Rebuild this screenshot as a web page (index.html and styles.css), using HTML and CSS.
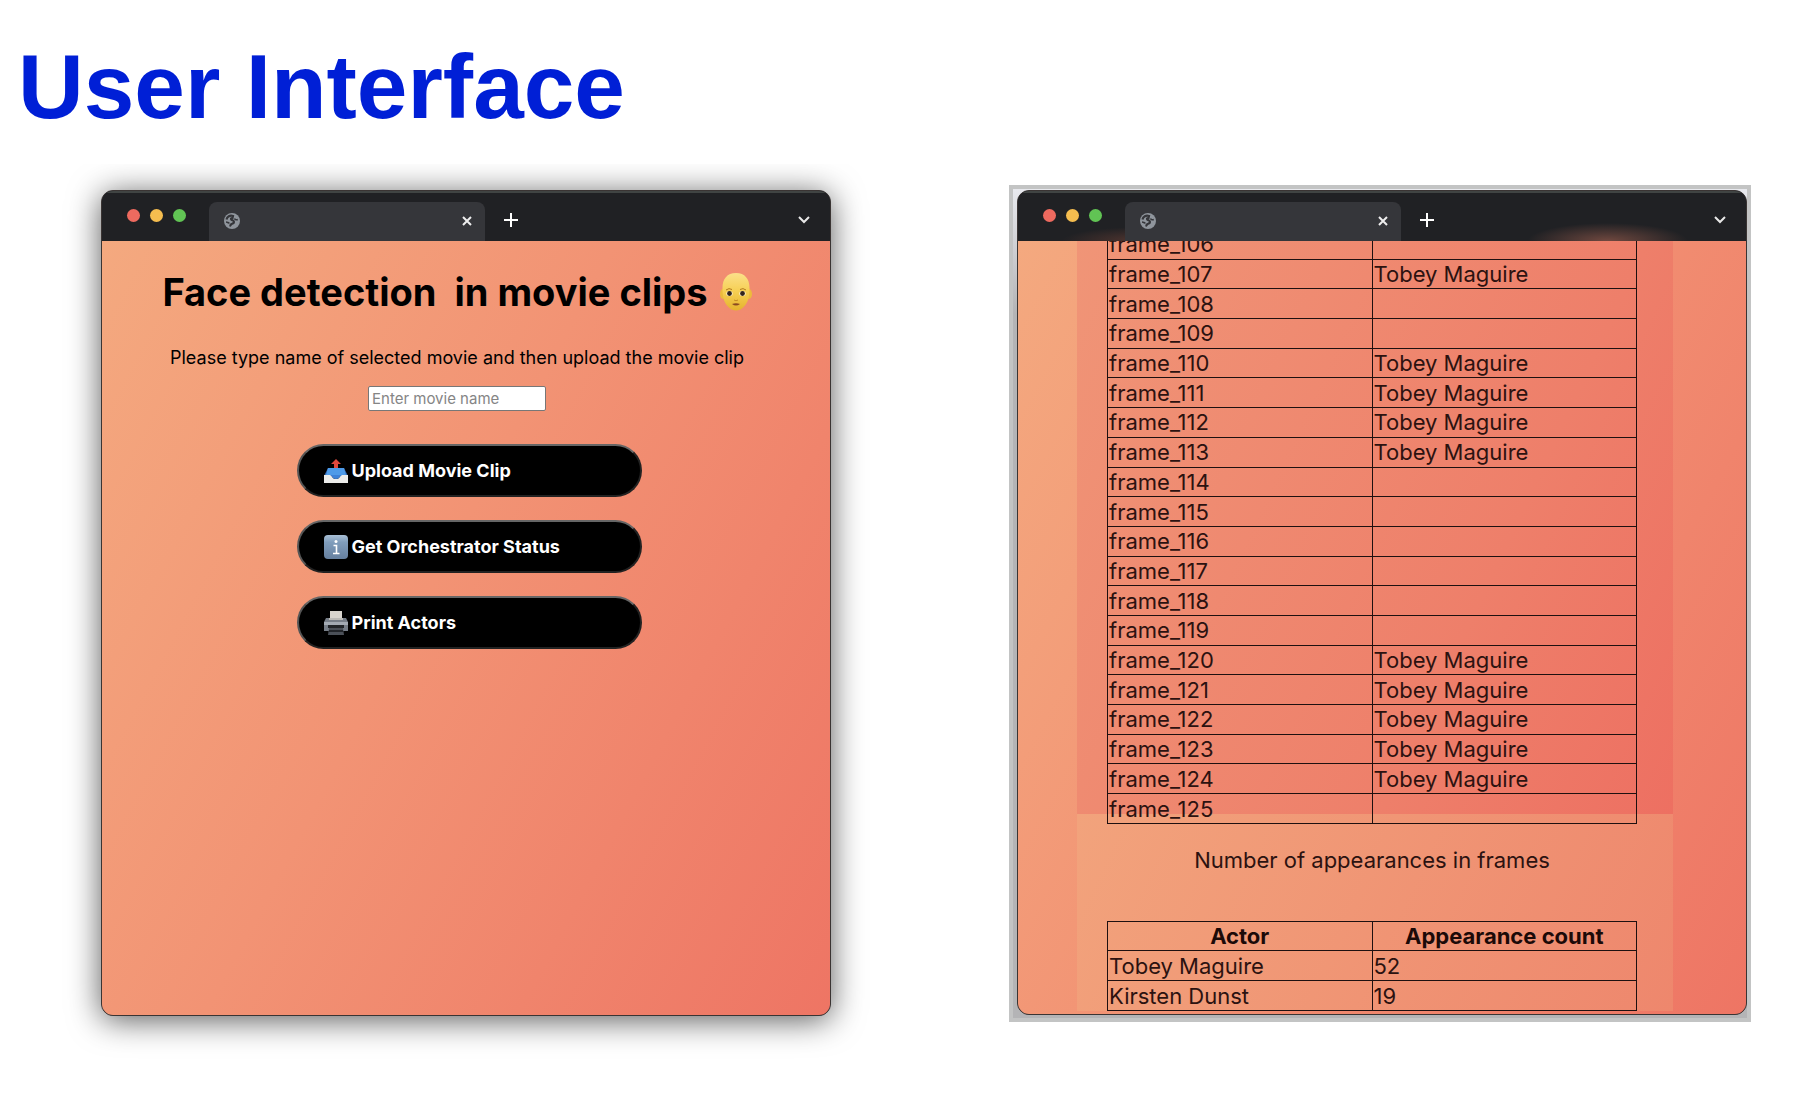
FILE: index.html
```html
<!DOCTYPE html>
<html lang="en">
<head>
<meta charset="utf-8">
<title>User Interface</title>
<meta name="viewport" content="width=device-width, initial-scale=1">
<link rel="stylesheet" href="styles.css">
</head>
<body>
<svg class="defs" aria-hidden="true">
  <symbol id="globe" viewBox="0 0 16 16"><circle cx="8" cy="8" r="8" fill="#8f959c"/><path d="M2.500 6.500C3 3.500 6 2 9 3L8.500 5C7 5 6.500 6 7.500 6.800C9 7.600 10 7.500 10 9C10 10.500 9 10.500 8 10.800C6.500 11.200 7 12.500 5.500 13" fill="none" stroke="#35363a" stroke-width="2.200"/><path d="M13.800 6.500C12.500 7 11 6.800 10.500 5.500M2 9C3.500 9 4 10 5.500 10" fill="none" stroke="#35363a" stroke-width="1.600"/></symbol>
  <symbol id="close" viewBox="0 0 10 10"><path d="M1 1L9 9M9 1L1 9" stroke="#eee" stroke-width="2"/></symbol>
  <symbol id="plus" viewBox="0 0 14 14"><path d="M7 0V14M0 7H14" stroke="#fff" stroke-width="2"/></symbol>
  <symbol id="chevron" viewBox="0 0 12 8"><path d="M1 1L6 6L11 1" fill="none" stroke="#e8e8e8" stroke-width="2"/></symbol>
</svg>

<header class="title"><h1>User Interface</h1></header>

<main class="screens">
  <section class="window window-shadow">
    <div class="chrome">
      <div class="lights"><span class="light red"></span><span class="light amber"></span><span class="light green"></span></div>
      <div class="tab"><svg class="globe"><use href="#globe"/></svg><button class="icon-button" aria-label="Close tab"><svg class="close"><use href="#close"/></svg></button></div>
      <button class="icon-button" aria-label="New tab"><svg class="plus"><use href="#plus"/></svg></button>
      <button class="icon-button menu" aria-label="Tab list"><svg class="chevron"><use href="#chevron"/></svg></button>
    </div>
    <div class="page upload">
      <h2>Face detection&nbsp; in movie clips
        <svg class="face" viewBox="0 0 32 38" aria-hidden="true">
          <defs><linearGradient id="skin" x1="0" y1="0" x2="0" y2="1"><stop offset="0" stop-color="#fbe08a"/><stop offset=".5" stop-color="#f6cf52"/><stop offset="1" stop-color="#e5b32e"/></linearGradient></defs>
          <ellipse cx="3" cy="21" rx="3" ry="5" fill="#edba3c"/><ellipse cx="29" cy="21" rx="3" ry="5" fill="#edba3c"/>
          <path d="M16 0C7 0 2.500 6 2.500 15C2.500 24 4 29 7.500 33C10 36 13 37.500 16 37.500S22 36 24.500 33C28 29 29.500 24 29.500 15C29.500 6 25 0 16 0Z" fill="url(#skin)"/>
          <path d="M6 17Q9 14.500 12 16.500M20 16.500Q23 14.500 26 17" fill="none" stroke="#b27a20" stroke-width="1"/>
          <ellipse cx="9.500" cy="20.500" rx="3.200" ry="2.600" fill="#fff1cc"/><ellipse cx="22.500" cy="20.500" rx="3.200" ry="2.600" fill="#fff1cc"/>
          <circle cx="9.500" cy="20.500" r="2.400" fill="#33251c"/><circle cx="22.500" cy="20.500" r="2.400" fill="#33251c"/>
          <path d="M14 27Q16 28.500 18 27" fill="none" stroke="#c48c24"/><path d="M12 31Q16 29.500 20 31Q16 34 12 31Z" fill="#8a4a20"/>
        </svg>
      </h2>
      <label for="movie">Please type name of selected movie and then upload the movie clip</label>
      <input id="movie" type="text" placeholder="Enter movie name">
      <div class="actions">
        <button class="action">
          <svg viewBox="0 0 24 24"><path d="M4 9H20L24 17H0Z" fill="#3268b4"/><path d="M4 9H20L22 16H2Z" fill="#4d9ae8"/><path d="M0 16H6C8 16 8 20 12 20S16 16 18 16H24V24H0Z" fill="#ececea"/><path d="M6 16C8 16 8 20 12 20S16 16 18 16Z" fill="#3c82d8"/><path d="M12 0L17 5H14V9H10V5H7Z" fill="#e0483c"/></svg>
          Upload Movie Clip</button>
        <button class="action">
          <svg viewBox="0 0 24 24"><defs><linearGradient id="blue" x1="0" y1="0" x2="0" y2="1"><stop offset="0" stop-color="#a9c0d6"/><stop offset=".3" stop-color="#809dbb"/><stop offset="1" stop-color="#66809f"/></linearGradient></defs><rect width="24" height="24" rx="4" fill="url(#blue)"/><circle cx="12" cy="6.500" r="1.500" fill="#fff"/><path d="M9.500 10.500H12.500V18M9 18.500H15.500" fill="none" stroke="#fff" stroke-width="1.600"/></svg>
          Get Orchestrator Status</button>
        <button class="action">
          <svg viewBox="0 0 24 24"><path d="M6 0H18V9H6Z" fill="#d9d5ce"/><path d="M2 7H22L24 11V20H0V11Z" fill="#777e88"/><path d="M5 7H19V9H5Z" fill="#bcbab6"/><path d="M0 11H24V14H0Z" fill="#a4abb4"/><path d="M4 14H20V17H4Z" fill="#23262a"/><path d="M5 17H19L20 24H4Z" fill="#4b5058"/><path d="M5 20H19" stroke="#22252a" stroke-width="2"/></svg>
          Print Actors</button>
      </div>
    </div>
  </section>

  <div class="frame">
    <section class="window">
      <div class="chrome glow">
        <div class="lights"><span class="light red"></span><span class="light amber"></span><span class="light green"></span></div>
        <div class="tab"><svg class="globe"><use href="#globe"/></svg><button class="icon-button" aria-label="Close tab"><svg class="close"><use href="#close"/></svg></button></div>
        <button class="icon-button" aria-label="New tab"><svg class="plus"><use href="#plus"/></svg></button>
        <button class="icon-button menu" aria-label="Tab list"><svg class="chevron"><use href="#chevron"/></svg></button>
      </div>
      <div class="page results">
        <div class="panel">
          <table class="frames">
            <tbody>
              <tr><td>frame_106</td><td></td></tr>
              <tr><td>frame_107</td><td>Tobey Maguire</td></tr>
              <tr><td>frame_108</td><td></td></tr>
              <tr><td>frame_109</td><td></td></tr>
              <tr><td>frame_110</td><td>Tobey Maguire</td></tr>
              <tr><td>frame_111</td><td>Tobey Maguire</td></tr>
              <tr><td>frame_112</td><td>Tobey Maguire</td></tr>
              <tr><td>frame_113</td><td>Tobey Maguire</td></tr>
              <tr><td>frame_114</td><td></td></tr>
              <tr><td>frame_115</td><td></td></tr>
              <tr><td>frame_116</td><td></td></tr>
              <tr><td>frame_117</td><td></td></tr>
              <tr><td>frame_118</td><td></td></tr>
              <tr><td>frame_119</td><td></td></tr>
              <tr><td>frame_120</td><td>Tobey Maguire</td></tr>
              <tr><td>frame_121</td><td>Tobey Maguire</td></tr>
              <tr><td>frame_122</td><td>Tobey Maguire</td></tr>
              <tr><td>frame_123</td><td>Tobey Maguire</td></tr>
              <tr><td>frame_124</td><td>Tobey Maguire</td></tr>
              <tr><td>frame_125</td><td></td></tr>
            </tbody>
          </table>
          <p>Number of appearances in frames</p>
          <table class="counts">
            <thead><tr><th>Actor</th><th>Appearance count</th></tr></thead>
            <tbody>
              <tr><td>Tobey Maguire</td><td>52</td></tr>
              <tr><td>Kirsten Dunst</td><td>19</td></tr>
            </tbody>
          </table>
        </div>
      </div>
    </section>
  </div>
</main>
</body>
</html>
```
FILE: styles.css
```css
* { box-sizing: border-box; }

body {
  margin: 0;
  background: #fff;
  color: #000;
  font-family: Inter, "Liberation Sans", sans-serif;
}

.defs { display: none; }

.title {
  position: relative;
  z-index: 1;
  height: 164px;
  padding: 37px 18px 0;
  background: #fff;
}

.title h1 {
  margin: 0;
  color: #001fd6;
  font: bold 91px/100px "Liberation Sans", Arial, sans-serif;
}

.screens {
  display: grid;
  grid-template-columns: 730fr 742fr;
  gap: 178px;
  padding: 21px 61px 48px 101px;
}

.window {
  display: flex;
  flex-direction: column;
  overflow: hidden;
  border: 1px solid #3a3433;
  border-radius: 12px;
  background: #202124;
}

.window-shadow {
  margin: 5px 0 6px;
  box-shadow: 0 4px 32px rgba(0, 0, 0, .65);
}

.frame {
  padding: 1px 0 3px 4px;
  border: 4px solid #c3c4c4;
  background: linear-gradient(#e8e9ee, #b4b4b6 15%, #b4b4b6);
}

/* Browser chrome */
.chrome {
  display: flex;
  align-items: flex-end;
  height: 50px;
  padding-right: 20px;
  border-top: 2px solid #404443;
  background: #202124;
}

.chrome.glow {
  background:
    radial-gradient(ellipse 80px 18px at 81% 100%, #70483f, transparent),
    radial-gradient(ellipse 80px 14px at 17% 100%, #52352f, transparent),
    #202124;
}

.lights {
  display: flex;
  gap: 10px;
  width: 107px;
  padding: 0 0 19px 25px;
}

.light { width: 13px; height: 13px; border-radius: 50%; }
.red { background: #ee6a5f; }
.amber { background: #f5bd4f; }
.green { background: #61c454; }

.tab {
  display: flex;
  align-items: center;
  justify-content: space-between;
  width: 276px;
  height: 39px;
  padding: 0 13px 2px 15px;
  margin-right: 19px;
  border-radius: 8px 8px 0 0;
  background: #35363a;
}

.icon-button {
  display: flex;
  align-items: center;
  justify-content: center;
  height: 37px;
  margin: 0 0 3px;
  padding: 0;
  border: 0;
  background: none;
}

.tab .icon-button { margin: 0; }
.menu { margin-left: auto; }
.globe { width: 16px; height: 16px; }
.close { width: 10px; height: 10px; }
.plus { width: 14px; height: 14px; }
.chevron { width: 12px; height: 8px; }

.page {
  flex: 1;
  background: linear-gradient(118deg, #f4a97f, #f29374 45%, #ee7564);
}

/* Upload page */
.upload {
  display: flex;
  flex-direction: column;
  align-items: center;
  padding: 24px 18px 40px 0;
}

.upload h2 {
  display: flex;
  align-items: center;
  gap: 12px;
  margin: 0 0 27px;
  font-size: 38px;
  line-height: 54px;
  font-weight: 700;
  white-space: nowrap;
}

.face { width: 32px; height: 38px; }

.upload label { font-size: 18px; line-height: 24px; white-space: nowrap; }

.upload input {
  width: 178px;
  height: 25px;
  margin: 16px 0 33px;
  padding: 0 3px;
  border: 1px solid #777;
  border-radius: 2px;
  background: #fff;
  font: 15px/20px Inter, sans-serif;
}

.upload input::placeholder { color: #858585; }

.actions {
  display: flex;
  flex-direction: column;
  gap: 23px;
  width: 345px;
  margin-left: 24px;
}

.action {
  display: flex;
  align-items: center;
  gap: 4px;
  height: 53px;
  padding: 0 25px;
  border: 2px solid #555;
  border-color: #666 #222 #222 #555;
  border-radius: 27px;
  background: #000;
  color: #fff;
  font: 700 18px/24px Inter, sans-serif;
}

.action svg { width: 24px; height: 24px; }

/* Results page */
.results {
  overflow: hidden;
  padding: 0 73px 3px 59px;
}

.panel {
  padding: 0 36px 0 30px;
  background:
    linear-gradient(115deg, #f2a37c, #ee876d) bottom / 100% 197px no-repeat,
    linear-gradient(115deg, #f09577, #ee7f6a 60%, #ed6b5f);
  font-size: 22px;
  line-height: 28px;
}

.panel table {
  width: 100%;
  table-layout: fixed;
  border-collapse: collapse;
  color: #2c1210;
}

.frames { height: 595px; margin-top: -12px; }
.counts { height: 90px; }

.panel th, .panel td {
  padding: 0 1px;
  border: 1px solid #1e1010;
  text-align: left;
}

.panel th { color: #1c0a08; text-align: center; }

.panel p {
  margin: 0;
  padding: 22px 0 47px;
  text-align: center;
  color: #2c1210;
}
```
